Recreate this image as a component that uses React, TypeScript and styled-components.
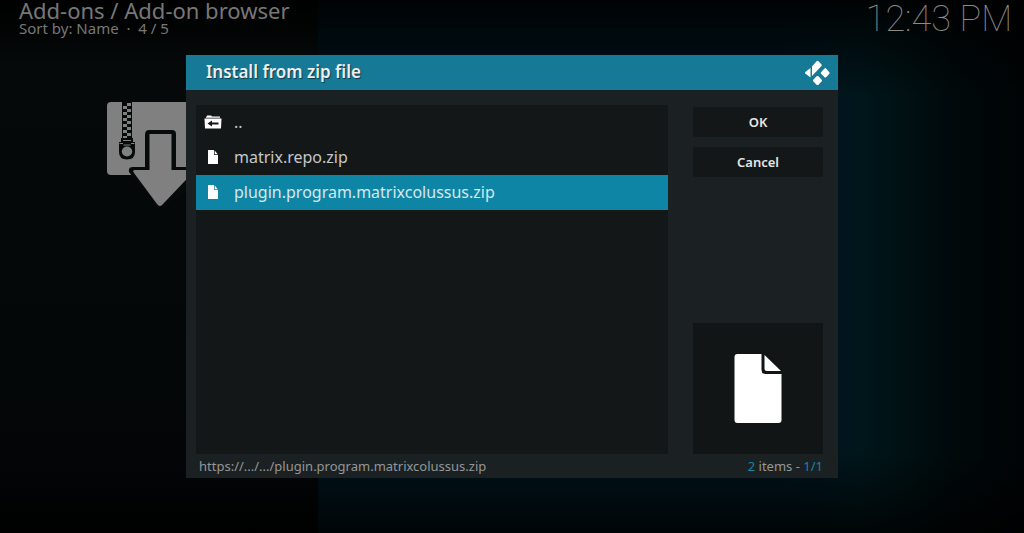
import React from 'react';
import styled, { createGlobalStyle } from 'styled-components';

const Global = createGlobalStyle`
  * { box-sizing: border-box; }
  body { margin: 0; background: #000; font-family: "Noto Sans", sans-serif; }
  h1, h2, p, ul { margin: 0; padding: 0; font-weight: 400; }
`;

const Screen = styled.div`
  position: relative;
  min-height: 100vh;
  display: flex;
  background:
    linear-gradient(180deg, rgba(0,0,0,.85) 0, rgba(0,0,0,0) 18%, rgba(0,0,0,0) 85%, rgba(0,0,0,.75) 100%),
    linear-gradient(90deg, #00131b 31%, #00131b 76%, #00161b 84%, #001114 88%, #00090b 93%, #000405 100%);
`;

const Backdrop = styled.main`
  width: 31%;
  min-width: 318px;
  background: linear-gradient(180deg, #000 0, #050909 12%, #040809 50%, #030506 88%, #000 100%);
`;

const PageHeader = styled.header`
  padding: 0 19px;
  color: #777;
  white-space: nowrap;
`;

const PageTitle = styled.h1`
  font-size: 22px;
  line-height: 20px;
`;

const PageMeta = styled.p`
  font-size: 15px;
  line-height: 16px;
  white-space: pre;
`;

const AddonArt = styled.svg`
  display: block;
  width: 108px;
  height: 106px;
  margin: 66px 0 0 106px;
`;

const Clock = styled.time`
  flex: 1;
  padding: 0 12px;
  text-align: right;
  font-family: Roboto, sans-serif;
  font-weight: 100;
  font-size: 36px;
  line-height: 38px;
  color: #8a8a8a;
`;

const Overlay = styled.div`
  position: absolute;
  inset: 0;
  display: flex;
  padding: 55px 186px;
`;

const Dialog = styled.section`
  flex: 1;
  display: flex;
  flex-direction: column;
  background: #1b2123;
`;

const DialogHeader = styled.header`
  display: flex;
  align-items: center;
  justify-content: space-between;
  height: 35px;
  padding: 0 8px 0 20px;
  background: #167a96;
`;

const DialogTitle = styled.h2`
  padding-bottom: 2px;
  font-size: 17px;
  line-height: 20px;
  font-weight: 600;
  color: #eee;
  text-shadow: 1px 1px 1px #0b3c4a;
`;

const DialogBody = styled.div`
  flex: 1;
  display: flex;
  gap: 25px;
  padding: 15px 15px 0 10px;
`;

const FileList = styled.ul`
  flex: 1;
  list-style: none;
  background: #131718;
`;

const FileButton = styled.button<{ $active?: boolean }>`
  display: flex;
  align-items: center;
  gap: 12px;
  width: 100%;
  height: 35px;
  padding: 0 8px 2px;
  border: 0;
  font: 16px/20px "Noto Sans", sans-serif;
  text-align: left;
  color: ${p => (p.$active ? '#d5e8ed' : '#c6c7c7')};
  background: ${p => (p.$active ? '#0f85a5' : 'transparent')};
`;

const Side = styled.aside`
  display: flex;
  flex-direction: column;
  gap: 10px;
  width: 130px;
  padding-top: 2px;
`;

const ActionButton = styled.button`
  height: 30px;
  border: 0;
  border-radius: 2px;
  background: #131718;
  color: #e6e6e6;
  font: 600 13px/16px "Noto Sans", sans-serif;
`;

const Preview = styled.div`
  display: flex;
  align-items: center;
  justify-content: center;
  height: 131px;
  margin-top: auto;
  background: #111516;
`;

const DialogFooter = styled.footer`
  display: flex;
  justify-content: space-between;
  padding: 4px 15px 4px 13px;
  font-size: 13px;
  line-height: 16px;
  color: #949798;
`;

const Accent = styled.span`
  color: #1585a3;
`;

const teeth = Array.from({ length: 12 }, (_, i) => i);

const ZipDownload = () => (
  <AddonArt viewBox="0 0 108 106" aria-hidden="true">
    <rect x="1" y="0" width="107" height="73" rx="4" fill="#808080" />
    <rect x="16" y="0" width="10" height="38" fill="#060a0b" />
    {teeth.map(i => (
      <rect key={i} x={i % 2 ? 17 : 21} y={i * 3 + 1} width="4" height="3" fill="#808080" />
    ))}
    <path d="M15 36h12v4h2v10q0 7.500-8 7.500T13 50V40h2z" fill="#060a0b" />
    <path d="M17 38.500h8M13.500 41.500h3.500M25 41.500h3.500M17.500 43h7" stroke="#808080" fill="none" />
    <ellipse cx="21" cy="49.500" rx="5.200" ry="5" fill="#808080" />
    <path d="M26 74L23 70q-1-5 4-5h12V33q0-5 4-5h23q4 0 4 4v33h39v9L58 104q-3 3-6 0z" fill="#060a0b" />
    <path d="M43.500 32h22v36h19q4 0 2 3L57 102q-3 4-6 0L28 71q-2-3 1-3h14.500z" fill="#808080" />
  </AddonArt>
);

const KodiLogo = () => (
  <svg width="26" height="26" viewBox="0 0 26 26" fill="#fff" aria-hidden="true">
    <path d="M8 6.500L12.500 1.300q1-1 2 0L17.500 4.500q.7.800 0 1.500L8 16z" />
    <path d="M6.500 8V17.500L1.300 13.500q-.7-.8 0-1.500z" />
    <path d="M20.500 8.500q.8-.8 1.600 0l3.200 3.700q.7.800 0 1.600l-3.200 3.400q-.8.800-1.600 0l-3.500-3.400q-.7-.8 0-1.600z" />
    <path d="M12.500 16.300q1-.8 2 0l3.200 3.400q.7.800 0 1.600l-3.200 3.400q-1 .8-2 0l-3.200-3.400q-.7-.8 0-1.600z" />
  </svg>
);

const FolderUpIcon = () => (
  <svg width="18" height="14" viewBox="0 0 18 14" aria-hidden="true">
    <path d="M2 2.700V1.500h1V.500h4l1 1h8V2.700z" fill="#fff" />
    <path d="M.500 3.500h17L17 13.500H1z" fill="#fff" />
    <path d="M3.500 8.500L8 5.500v2h6.500v2H8v2z" fill="#131718" />
  </svg>
);

const SmallFileIcon = () => (
  <svg width="18" height="14" viewBox="0 0 18 14" aria-hidden="true">
    <path d="M4.500 0H10v5h4v8.500q0 .500-.500.500h-9q-.500 0-.500-.500V.500q0-.500.500-.500z" fill="#fff" />
    <path d="M10.700.500L13.700 4.200h-3z" fill="#fff" />
  </svg>
);

const LargeFileIcon = () => (
  <svg width="48" height="70" viewBox="0 0 48 70" fill="#fff" aria-hidden="true">
    <path d="M3 0H27.500V16q0 4 4 4H47.500V66q0 3-3 3H3.500q-3 0-3-3V3q0-3 3-3z" />
    <path d="M30.500 1L47 17H33q-2.500 0-2.500-2.500z" />
  </svg>
);

export default function App() {
  return (
    <Screen>
      <Global />
      <Backdrop>
        <PageHeader>
          <PageTitle>Add-ons / Add-on browser</PageTitle>
          <PageMeta>{'Sort by: Name  ·  4 / 5'}</PageMeta>
        </PageHeader>
        <ZipDownload />
      </Backdrop>
      <Clock>12:43 PM</Clock>
      <Overlay>
        <Dialog role="dialog" aria-labelledby="dialog-title">
          <DialogHeader>
            <DialogTitle id="dialog-title">Install from zip file</DialogTitle>
            <KodiLogo />
          </DialogHeader>
          <DialogBody>
            <FileList>
              <li><FileButton><FolderUpIcon />..</FileButton></li>
              <li><FileButton><SmallFileIcon />matrix.repo.zip</FileButton></li>
              <li><FileButton $active><SmallFileIcon />plugin.program.matrixcolussus.zip</FileButton></li>
            </FileList>
            <Side>
              <ActionButton>OK</ActionButton>
              <ActionButton>Cancel</ActionButton>
              <Preview><LargeFileIcon /></Preview>
            </Side>
          </DialogBody>
          <DialogFooter>
            <span>https://.../.../plugin.program.matrixcolussus.zip</span>
            <span><Accent>2</Accent> items - <Accent>1/1</Accent></span>
          </DialogFooter>
        </Dialog>
      </Overlay>
    </Screen>
  );
}
